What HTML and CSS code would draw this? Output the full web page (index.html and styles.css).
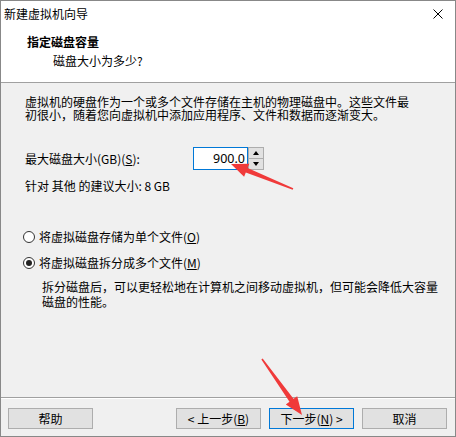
FILE: index.html
```html
<!DOCTYPE html>
<html lang="zh-CN">
<head>
<meta charset="utf-8">
<title>新建虚拟机向导</title>
<link rel="stylesheet" href="styles.css">
</head>
<body>
<div class="window">
  <div class="top">
    <div class="titlebar">
      <span class="title">新建虚拟机向导</span>
      <svg class="close" width="10" height="10" viewBox="0 0 10 10"><path d="M0.5 0.5L9.5 9.5M9.5 0.5L0.5 9.5" stroke="#000" stroke-width="1" fill="none"/></svg>
    </div>
    <div class="header">
      <div class="h-title">指定磁盘容量</div>
      <div class="h-sub">磁盘大小为多少?</div>
    </div>
  </div>
  <div class="content">
    <div class="intro">
      <div class="line">虚拟机的硬盘作为一个或多个文件存储在主机的物理磁盘中。这些文件最</div>
      <div class="line">初很小，随着您向虚拟机中添加应用程序、文件和数据而逐渐变大。</div>
    </div>
    <div class="size-row">
      <span class="size-label">最大磁盘大小(GB)(<u>S</u>):</span>
      <div class="spin">
        <div class="spin-input">900.0</div>
        <div class="spin-btns">
          <div class="spin-btn"><span class="tri-up"></span></div>
          <div class="spin-btn"><span class="tri-down"></span></div>
        </div>
      </div>
    </div>
    <div class="hint">针对 其他 的建议大小: 8 GB</div>
    <div class="radio first"><span class="dot"></span>将虚拟磁盘存储为单个文件(<u>O</u>)</div>
    <div class="radio second checked"><span class="dot"></span>将虚拟磁盘拆分成多个文件(<u>M</u>)</div>
    <div class="desc">
      <div class="line">拆分磁盘后，可以更轻松地在计算机之间移动虚拟机，但可能会降低大容量</div>
      <div class="line">磁盘的性能。</div>
    </div>
  </div>
  <div class="footer">
    <button class="btn">帮助</button>
    <div class="spacer"></div>
    <button class="btn">&lt; 上一步(<u>B</u>)</button>
    <button class="btn primary">下一步(<u>N</u>) &gt;</button>
    <button class="btn">取消</button>
  </div>
  <svg class="annot" width="456" height="437" viewBox="0 0 456 437">
    <polygon fill="#f03a3a" points="293.3,188.3 247.6,168.0 249.3,163.8 231,164 244.1,176.8 245.8,172.6 292.7,189.7"/>
    <polygon fill="#f03a3a" points="262.65,358.5 293.5,398.85 297.2,396.2 302,415 285.8,404.4 289.5,401.75 261.35,359.5"/>
  </svg>
</div>
</body>
</html>
```

FILE: styles.css
```css
* { box-sizing: border-box; }
html, body { margin: 0; padding: 0; }
body {
  width: 456px;
  height: 437px;
  background: #fff;
  font-family: "Noto Sans CJK SC", "Noto Sans", sans-serif;
  font-size: 12px;
  color: #000;
}
.window {
  position: relative;
  width: 456px;
  height: 437px;
  border: 1px solid #888;
  display: flex;
  flex-direction: column;
  background: #f0f0f0;
  overflow: hidden;
}
.top {
  background: #fff;
  border-bottom: 1px solid #a0a0a0;
}
.titlebar {
  height: 26px;
  display: flex;
  align-items: center;
  justify-content: space-between;
  padding: 0 12px 0 3px;
}
.title { line-height: 16px; }
.close { display: block; }
.header {
  height: 55px;
  padding: 7px 0 0 26px;
}
.h-title {
  font-weight: bold;
  line-height: 16px;
}
.h-sub {
  line-height: 16px;
  margin-top: 3px;
  padding-left: 26px;
}
.content {
  flex: 1;
  padding: 12px 0 0 24px;
}
.intro .line {
  height: 13px;
  line-height: 13px;
  white-space: nowrap;
}
.size-row {
  display: flex;
  align-items: center;
  margin-top: 26px;
  height: 23px;
}
.size-label {
  width: 168px;
  line-height: 16px;
}
.spin { display: flex; }
.spin-input {
  width: 55px;
  height: 23px;
  border: 1px solid #0078d7;
  background: #fff;
  text-align: right;
  padding-right: 2px;
  line-height: 21px;
  font-family: "Noto Sans", sans-serif;
  font-size: 12.5px;
}
.spin-btns {
  display: flex;
  flex-direction: column;
  width: 16px;
  height: 23px;
}
.spin-btn {
  flex: 1;
  background: #e1e1e1;
  border: 1px solid #adadad;
  display: flex;
  align-items: center;
  justify-content: center;
}
.spin-btn + .spin-btn { border-top: none; }
.tri-up, .tri-down {
  width: 0;
  height: 0;
  border-left: 3.5px solid transparent;
  border-right: 3.5px solid transparent;
}
.tri-up { border-bottom: 4px solid #000; }
.tri-down { border-top: 4px solid #000; }
.hint {
  margin-top: 9px;
  line-height: 14px;
}
.radio {
  display: flex;
  align-items: center;
  height: 16px;
  line-height: 16px;
}
.radio.first { margin-top: 36px; }
.radio.second { margin-top: 10px; }
.dot {
  width: 12px;
  height: 12px;
  border: 1px solid #333;
  border-radius: 50%;
  background: #fff;
  margin-left: -2px;
  margin-right: 4px;
  display: flex;
  align-items: center;
  justify-content: center;
}
.radio.checked .dot::after {
  content: "";
  width: 6px;
  height: 6px;
  border-radius: 50%;
  background: #222;
}
.desc {
  margin-top: 8px;
  padding-left: 17px;
}
.desc .line {
  height: 15px;
  line-height: 15px;
  white-space: nowrap;
}
.footer {
  height: 39px;
  border-top: 1px solid #a0a0a0;
  box-shadow: inset 0 1px #fff;
  padding: 10px 8px 0 7px;
  display: flex;
  align-items: flex-start;
  gap: 8px;
}
.spacer { flex: 1; }
.btn {
  width: 85px;
  height: 21px;
  padding: 0;
  background: #e1e1e1;
  border: 1px solid #adadad;
  font: inherit;
  color: #000;
  line-height: 19px;
  text-align: center;
}
.btn.primary { border-color: #0078d7; }
.annot {
  position: absolute;
  left: -1px;
  top: -1px;
  pointer-events: none;
}
```
